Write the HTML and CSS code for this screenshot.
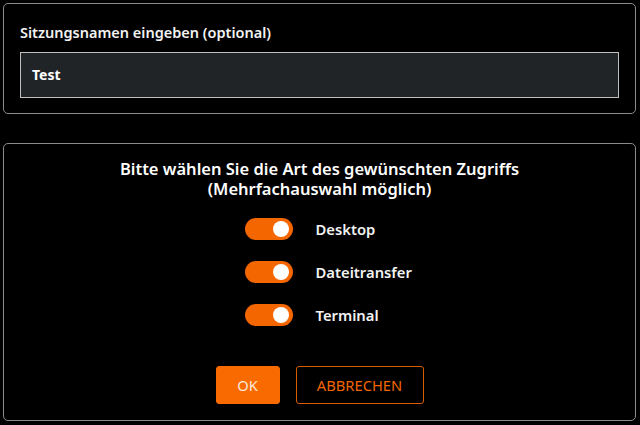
FILE: index.html
```html
<!DOCTYPE html>
<html lang="de">
<head>
<meta charset="utf-8">
<link rel="stylesheet" href="styles.css">
</head>
<body>
<div class="panel name-panel">
  <label class="field-label" for="sess">Sitzungsnamen eingeben (optional)</label>
  <div class="input" id="sess">Test</div>
</div>
<div class="panel access-panel">
  <div class="title">Bitte wählen Sie die Art des gewünschten Zugriffs<br>(Mehrfachauswahl möglich)</div>
  <div class="options">
    <div class="row"><span class="toggle"><span class="knob"></span></span><span class="opt">Desktop</span></div>
    <div class="row"><span class="toggle"><span class="knob"></span></span><span class="opt">Dateitransfer</span></div>
    <div class="row"><span class="toggle"><span class="knob"></span></span><span class="opt">Terminal</span></div>
  </div>
  <div class="buttons">
    <button class="btn btn-ok">OK</button>
    <button class="btn btn-cancel">ABBRECHEN</button>
  </div>
</div>
</body>
</html>
```
FILE: styles.css
```css
* { box-sizing: border-box; }
html, body { margin: 0; padding: 0; background: #000; }
body {
  font-family: "Noto Sans", "Open Sans", "DejaVu Sans", sans-serif;
  color: #f2f2f2;
  padding: 3px 4px 0 3px;
}
.panel {
  border: 1px solid #8c8c8c;
  border-radius: 5px;
}
.name-panel {
  height: 111px;
  padding: 18px 16px 0 16px;
}
.field-label {
  display: block;
  font-size: 14.5px;
  font-weight: 600;
  line-height: 20px;
  height: 20px;
  margin-bottom: 10px;
}
.input {
  height: 46px;
  background: #212427;
  border: 1px solid #c0c0c0;
  padding-left: 11px;
  font-size: 14px;
  font-weight: 700;
  line-height: 44px;
  color: #fff;
}
.access-panel {
  margin-top: 29px;
  height: 278px;
  padding-top: 15px;
}
.title {
  text-align: center;
  font-size: 16.5px;
  font-weight: 600;
  line-height: 20px;
  color: #fff;
}
.options {
  width: 150px;
  margin: 19px auto 0;
  display: flex;
  flex-direction: column;
  gap: 21px;
}
.row {
  display: flex;
  align-items: center;
  gap: 23px;
  height: 22px;
  white-space: nowrap;
}
.toggle {
  flex: none;
  width: 48px;
  height: 22px;
  border-radius: 11px;
  background: #f46600;
  display: flex;
  align-items: center;
  justify-content: flex-end;
  padding-right: 4px;
}
.knob {
  width: 16px;
  height: 16px;
  border-radius: 50%;
  background: #fff;
}
.opt {
  font-size: 14.8px;
  font-weight: 600;
  color: #f2f2f2;
}
.buttons {
  display: flex;
  justify-content: center;
  gap: 16px;
  margin-top: 40px;
}
.btn {
  height: 38px;
  font-family: "Noto Sans", "Open Sans", "DejaVu Sans", sans-serif;
  font-size: 14.7px;
  border-radius: 3px;
  padding: 0;
}
.btn-ok {
  width: 64px;
  background: #f96a00;
  border: 1px solid #f96a00;
  color: #fbe9dc;
}
.btn-cancel {
  width: 128px;
  background: #000;
  border: 1px solid #d85c00;
  color: #f26600;
}
```
